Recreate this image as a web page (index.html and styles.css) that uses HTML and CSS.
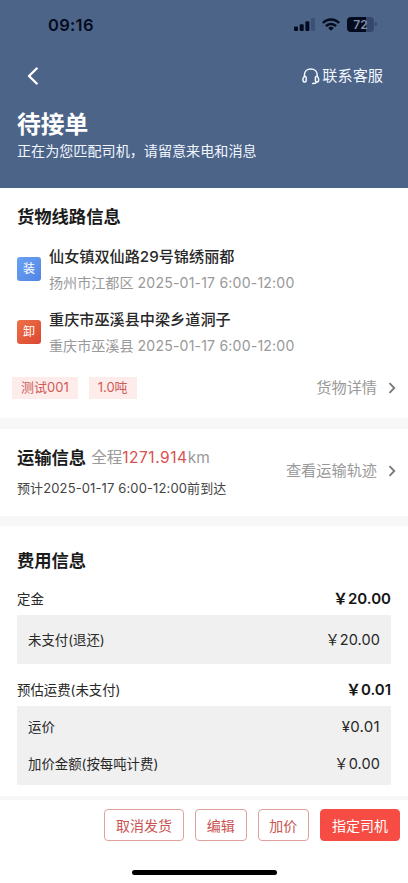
FILE: index.html
```html
<!DOCTYPE html>
<html lang="zh-CN">
<head>
<meta charset="utf-8">
<meta name="viewport" content="width=device-width, initial-scale=1">
<title>待接单</title>
<link rel="stylesheet" href="styles.css">
</head>
<body>
<div class="page">
  <header class="hero">
    <div class="status">
      <span class="time">09:16</span>
      <div class="status-icons">
        <svg width="21" height="13" viewBox="0 0 21 13" fill="#050b1e"><rect x="0" y="8.5" width="4" height="4.5" rx="1"/><rect x="5.7" y="6.3" width="4" height="6.7" rx="1"/><rect x="11.4" y="3.2" width="4" height="9.8" rx="1"/><rect x="17" y="0" width="4" height="13" rx="1" fill="#3b5076"/></svg>
        <svg width="18" height="13" viewBox="0 0 18 13" fill="none" stroke="#050b1e" stroke-width="2.4"><path d="M.9 5C5.4.3 12.6.3 17.1 5"/><path d="M3.9 8.2c2.8-2.9 7.4-2.9 10.2 0"/><path d="M9 12.8 6.2 10c1.500-1.600 4.100-1.600 5.600 0z" fill="#050b1e" stroke="none"/></svg>
        <div class="battery"><span>72</span></div>
      </div>
    </div>
    <nav class="nav">
      <svg class="back" width="12" height="19" viewBox="0 0 12 19" fill="none" stroke="#fff" stroke-width="2.4" stroke-linecap="round" stroke-linejoin="round"><path d="M9.700 1.500 2 9l7.700 7.500"/></svg>
      <a class="service">
        <svg width="18" height="17" viewBox="0 0 18 17" fill="none" stroke="#f1f6ff" stroke-width="1.5" stroke-linecap="round" stroke-linejoin="round"><path d="M2.400 8.800V7C2.400 3.300 5.200 1 8.800 1s6.400 2.300 6.400 6v1.800"/><path d="M2.400 8.500C1.200 9.400.9 10.500.9 11.500c0 1.500.7 2.600 1.900 2.600.9 0 1.400-.6 1.400-1.500V9.700c0-1-.9-1.800-1.800-1.200z"/><path d="M15.200 8.500c1.200.9 1.500 2 1.500 3 0 1.500-.7 2.600-1.900 2.600-.9 0-1.400-.6-1.400-1.500V9.700c0-1 .9-1.800 1.800-1.200zM14.700 14.100c-.7 1.200-1.900 1.500-4.100 1.500"/></svg>
        <span>联系客服</span>
      </a>
    </nav>
    <h1>待接单</h1>
    <p class="hint">正在为您匹配司机，请留意来电和消息</p>
  </header>

  <section class="card route">
    <h2>货物线路信息</h2>
    <div class="stop">
      <span class="badge load">装</span>
      <div class="stop-text">
        <div class="place">仙女镇双仙路29号锦绣丽都</div>
        <div class="when">扬州市江都区 <span>2025-01-17 6:00-12:00</span></div>
      </div>
    </div>
    <div class="stop">
      <span class="badge unload">卸</span>
      <div class="stop-text">
        <div class="place">重庆市巫溪县中梁乡道洞子</div>
        <div class="when">重庆市巫溪县 <span>2025-01-17 6:00-12:00</span></div>
      </div>
    </div>
    <div class="tags">
      <span class="tag">测试001</span>
      <span class="tag">1.0吨</span>
      <a class="more">货物详情<svg width="8" height="12" viewBox="0 0 8 12"><path d="M1.500 1.200 6.300 6l-4.800 4.800"/></svg></a>
    </div>
  </section>

  <section class="card transport">
    <div>
      <div class="distance"><h2>运输信息</h2><span class="total">全程<b>1271.914</b>km</span></div>
      <p class="eta">预计2025-01-17 6:00-12:00前到达</p>
    </div>
    <a class="more">查看运输轨迹<svg width="8" height="12" viewBox="0 0 8 12"><path d="M1.500 1.200 6.300 6l-4.800 4.800"/></svg></a>
  </section>

  <section class="card fees">
    <h2>费用信息</h2>
    <div class="row deposit"><span>定金</span><strong>￥20.00</strong></div>
    <div class="box single">
      <div class="row"><span>未支付(退还)</span><span class="amount">￥20.00</span></div>
    </div>
    <div class="row freight"><span>预估运费(未支付)</span><strong>￥0.01</strong></div>
    <div class="box double">
      <div class="row"><span>运价</span><span class="amount plain">¥0.01</span></div>
      <div class="row"><span>加价金额(按每吨计费)</span><span class="amount">￥0.00</span></div>
    </div>
  </section>

  <footer class="actions">
    <button class="btn wide">取消发货</button>
    <button class="btn">编辑</button>
    <button class="btn">加价</button>
    <button class="btn wide primary">指定司机</button>
  </footer>
  <div class="home"></div>
</div>
</body>
</html>
```
FILE: styles.css
```css
* { box-sizing: border-box; }
body, h1, h2, p { margin: 0; }
body { background: #f7f7f7; font-family: Inter, "Noto Sans CJK SC", sans-serif; color: #222; }
.page { width: 408px; height: 883px; display: flex; flex-direction: column; overflow: hidden; white-space: nowrap; }

.hero { height: 188px; background: #4c6488; color: #f1f6ff; flex: none; }
.status { height: 49px; padding: 0 32px 0 48px; display: flex; justify-content: space-between; align-items: center; }
.time { font-size: 16.500px; font-weight: 600; color: #050b1e; line-height: 20px; letter-spacing: .3px; }
.status-icons { display: flex; align-items: center; gap: 7px; }
.battery { width: 27px; height: 15px; margin-right: 2px; border-radius: 4px; background: linear-gradient(90deg, #050b1e 72%, #34486d 72%); color: #8291ab; font-family: Inter, sans-serif; font-size: 12px; font-weight: 600; display: flex; align-items: center; justify-content: center; line-height: 15px; position: relative; }
.battery::after { content: ""; position: absolute; right: -3px; top: 5px; width: 2px; height: 4px; border-radius: 0 2px 2px 0; background: #34486d; }
.nav { height: 54px; padding: 0 25px 0 27px; display: flex; justify-content: space-between; align-items: center; }
.service { display: flex; align-items: center; gap: 2px; font-size: 15.200px; line-height: 22px; }
h1 { padding: 0 17px; margin-top: 6px; font-size: 23.800px; line-height: 32px; font-weight: 700; color: #fff; }
.hint { padding: 0 17px; margin-top: -1px; font-size: 14.100px; line-height: 22px; }

.card { background: #fff; padding: 0 17px; flex: none; }
h2 { font-size: 17.300px; line-height: 24px; font-weight: 700; color: #1b1b1b; }

.route { height: 230px; padding-top: 17px; margin-bottom: 11px; }
.route h2 { margin-bottom: 16px; }
.stop { display: flex; align-items: center; height: 50px; margin-bottom: 13px; }
.stop-text { padding-bottom: 1px; }
.badge { width: 24px; height: 24px; margin: -2px 8px 0 0; border-radius: 3px; color: #fff; font-size: 12px; line-height: 23px; text-align: center; }
.load { background: linear-gradient(135deg, #6aa2f3, #5185e5); }
.unload { background: linear-gradient(135deg, #ed7347, #dc4632); }
.place { font-size: 15.150px; line-height: 25px; font-weight: 500; color: #282828; }
.when { font-size: 14.100px; line-height: 27px; color: #999; }
.when span { letter-spacing: .18px; }
.tags { display: flex; align-items: center; height: 22px; margin: 19px -5px 0; padding-right: 5px; }
.tag { height: 22px; padding: 0 9px; margin-right: 11px; background: #feeceb; color: #cf5a58; font-size: 13px; line-height: 20px; }
.more { display: flex; align-items: center; margin-left: auto; gap: 11px; margin-right: -5px; font-size: 15.200px; line-height: 22px; color: #999; }
.more svg { fill: none; stroke: #777; stroke-width: 1.800; }

.transport { height: 87px; padding-top: 17px; margin-bottom: 10px; display: flex; }
.transport .more { height: 22px; margin-top: 14px; }
.distance { display: flex; align-items: center; height: 24px; }
.total { margin-left: 5px; font-size: 15.500px; line-height: 22px; color: #999; }
.total b { font-weight: 400; color: #d8514f; letter-spacing: .55px; }
.eta { margin-top: 8px; font-size: 13px; line-height: 20px; letter-spacing: .12px; color: #444; }

.fees { height: 270px; padding-top: 23px; }
.fees h2 { margin-bottom: 16px; }
.row { display: flex; align-items: center; justify-content: space-between; font-size: 13.400px; line-height: 20px; color: #282828; }
.row strong { font-size: 15px; font-weight: 600; color: #151515; }
.row .amount { font-size: 14.500px; letter-spacing: .1px; }
.row .plain { font-size: 15px; letter-spacing: .3px; }
.deposit { height: 20px; margin-bottom: 6px; }
.box { background: #f0f0f0; padding: 0 11px; }
.single { height: 49px; display: grid; }
.freight { height: 42px; padding-top: 10px; }
.double { height: 79px; padding-top: 2px; }
.double .row { height: 37px; }

.actions { flex: none; height: 54px; margin-top: 4px; padding: 9px 8px 0 0; background: #fff; display: flex; justify-content: flex-end; gap: 11px; }
.btn { width: 51.500px; height: 32px; padding: 0; border: 1px solid #dfa09e; border-radius: 4px; background: #fff; color: #c95452; font: 14px/29px Inter, "Noto Sans CJK SC", sans-serif; }
.wide { width: 80px; }
.primary { background: #f74c43; border-color: #f74c43; color: #fff; }
.home { flex: 1; background: #fff; padding: 16px 0 0 132px; }
.home::before { content: ""; display: block; width: 145px; height: 5px; border-radius: 3px; background: #000; }
```
